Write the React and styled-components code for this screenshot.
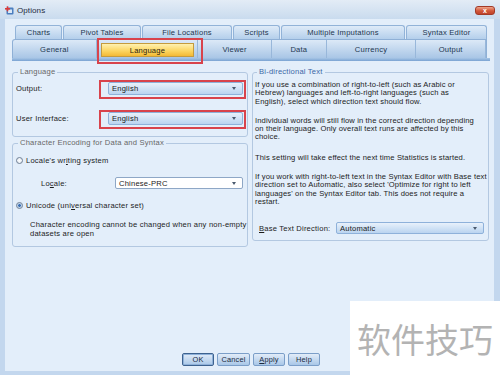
import React from 'react';
import styled, { createGlobalStyle, css } from 'styled-components';

const GlobalStyle = createGlobalStyle`
  html, body { margin: 0; padding: 0; background: #ffffff; }
  body { font-family: "Liberation Sans", Arial, sans-serif; }
  * { box-sizing: border-box; }
`;

const Window = styled.div`
  position: relative;
  width: 500px;
  height: 375px;
  background: #c3d7ee;
  display: flex;
  flex-direction: column;
  overflow: hidden;
  font-size: 7.6px;
  letter-spacing: 0.2px;
  color: #1c1c1c;
`;

const TitleBar = styled.div`
  flex: none;
  height: 19px;
  display: flex;
  align-items: center;
  padding: 1px 5px 0 5px;
  background: linear-gradient(#e3ecf6, #c9dbee);
`;

const TitleText = styled.span`
  margin-left: 3px;
  font-size: 8px;
  letter-spacing: 0.1px;
  color: #1e2c3e;
`;

const CloseButton = styled.div`
  margin-left: auto;
  width: 20px;
  height: 9px;
  border: 1px solid #a23a28;
  border-radius: 3px;
  background: linear-gradient(#eea58c, #d2573a 55%, #c0432a);
  display: flex;
  align-items: center;
  justify-content: center;
  color: #fff;
  font-size: 7px;
  font-weight: bold;
  line-height: 1;
`;

const Client = styled.div`
  flex: 1;
  margin: 0 6px 4px 5px;
  background: #e3eefa;
  display: flex;
  flex-direction: column;
  padding: 6px 4px 5px 7px;
`;

const TabRowTop = styled.div`
  display: flex;
  gap: 1px;
  height: 14px;
  padding-left: 3px;
`;

const TopTab = styled.div`
  width: ${p => p.$w}px;
  height: 14px;
  display: flex;
  align-items: center;
  justify-content: center;
  border: 1px solid #92b3d8;
  border-bottom: none;
  border-radius: 3px 3px 0 0;
  background: linear-gradient(#dfebf8, #b4cfeb);
  color: #22364f;
  white-space: nowrap;
`;

const TabRowBottom = styled.div`
  display: flex;
  width: 475px;
  height: 19px;
  border: 1px solid #8fb0d6;
  border-bottom: none;
  border-radius: 3px 0 0 0;
  background: linear-gradient(#dce9f7, #a9c6e6);
`;

const BottomTab = styled.div`
  position: relative;
  width: ${p => p.$w}px;
  display: flex;
  align-items: center;
  justify-content: center;
  border-right: 1px solid #98b7da;
  color: #22364f;
  white-space: nowrap;
  ${p => p.$active && css`
    z-index: 2;
    padding: 3px 3px 1px 4px;
    &::after {
      content: '';
      position: absolute;
      left: 0;
      right: -6px;
      top: -2px;
      bottom: -6px;
      border: 2px solid #d8434c;
    }
  `}
`;

const ActiveFace = styled.div`
  flex: 1;
  align-self: stretch;
  display: flex;
  align-items: center;
  justify-content: center;
  border: 1px solid #c49b3e;
  background: linear-gradient(#fff1b0, #fbd45e 60%, #f3b935);
  color: #2a2410;
`;

const TabUnderline = styled.div`
  height: 3px;
  background: linear-gradient(#a7c5e6, #7aa3d2);
`;

const Panels = styled.div`
  display: flex;
  align-items: flex-start;
  gap: 4px;
  margin-top: 7px;
`;

const Column = styled.div`
  width: ${p => p.$w}px;
  display: flex;
  flex-direction: column;
`;

const Group = styled.fieldset`
  margin: ${p => p.$mt || 0}px 0 0 0;
  padding: ${p => p.$pad};
  border: 1px solid #b3c8e1;
  border-radius: 3px;
  min-width: 0;
  display: flex;
  flex-direction: column;
`;

const Legend = styled.legend`
  margin-left: 2px;
  padding: 0 2px;
  line-height: 8px;
  color: ${p => (p.$blue ? '#3b67a6' : '#676767')};
`;

const FieldRow = styled.div`
  display: flex;
  align-items: center;
  margin-top: ${p => p.$mt || 0}px;
  padding-left: ${p => p.$pl || 0}px;
`;

const Label = styled.span`
  width: ${p => p.$w}px;
  flex: none;
  color: #1c1c1c;
`;

const Combo = styled.div`
  position: relative;
  width: ${p => p.$w}px;
  height: ${p => p.$h || 12}px;
  display: flex;
  align-items: center;
  padding: 0 2px 0 3px;
  border: 1px solid ${p => (p.$white ? '#8ea7c6' : '#8eb1da')};
  border-radius: 2px;
  background: ${p => (p.$white ? '#ffffff' : 'linear-gradient(#e8f1fb, #bad4f0)')};
  color: #1a1a1a;
  ${p => p.$marked && css`
    &::after {
      content: '';
      position: absolute;
      left: -10px;
      right: -4px;
      top: -3px;
      bottom: -5px;
      border: 2px solid #d8434c;
    }
  `}
`;

const ComboText = styled.span`
  flex: 1;
  white-space: nowrap;
`;

const Arrow = styled.span`
  width: 0;
  height: 0;
  margin-right: 4px;
  border-left: 2.5px solid transparent;
  border-right: 2.5px solid transparent;
  border-top: 3px solid #4a5a6e;
`;

const RadioRow = styled.div`
  display: flex;
  align-items: center;
  gap: 3px;
  height: 9px;
  margin-top: ${p => p.$mt || 0}px;
`;

const Radio = styled.span`
  width: 7px;
  height: 7px;
  flex: none;
  border-radius: 50%;
  border: 1px solid #6f8095;
  background: ${p =>
    p.$checked
      ? 'radial-gradient(circle, #3b6db0 0 32%, #9fbfe3 42%, #ffffff 100%)'
      : 'radial-gradient(circle, #ffffff, #dde5ee)'};
`;

const Note = styled.div`
  margin-top: ${p => p.$mt || 0}px;
  padding-left: ${p => p.$pl || 0}px;
  line-height: 8.5px;
  white-space: nowrap;
`;

const Paragraph = styled.p`
  margin: ${p => p.$mt || 0}px 0 0 0;
  line-height: 8.3px;
  letter-spacing: 0.13px;
  white-space: nowrap;
`;

const ButtonBar = styled.div`
  margin-top: auto;
  display: flex;
  justify-content: center;
  gap: 3px;
`;

const Button = styled.button`
  width: ${p => p.$w}px;
  height: 13px;
  padding: 0;
  font-family: inherit;
  font-size: 7.4px;
  letter-spacing: 0.2px;
  color: #1a2a40;
  border: 1px solid ${p => (p.$default ? '#3d628f' : '#7b9ec8')};
  box-shadow: ${p => (p.$default ? 'inset 0 0 0 1px #8fb1d9' : 'none')};
  border-radius: 2px;
  background: linear-gradient(#e2ecf8, #a8c7e8);
`;

const Watermark = styled.div`
  position: absolute;
  right: 0;
  bottom: 0;
  width: 150px;
  height: 74px;
  background: #ffffff;
  display: flex;
  align-items: center;
  justify-content: center;
  font-family: "Noto Sans CJK SC", sans-serif;
  font-size: 34px;
  letter-spacing: 0;
  color: #b3b3b3;
`;

const AppIcon = () => (
  <svg width="9" height="9" viewBox="0 0 9 9">
    <rect x="1.5" y="1.5" width="7" height="7" rx="1" fill="#4c7fc0" />
    <rect x="3" y="3.5" width="4" height="3.5" fill="#dbe8f6" />
    <rect x="0" y="2" width="5" height="1.6" fill="#d93a3a" />
    <rect x="1.7" y="0.3" width="1.6" height="5" fill="#d93a3a" />
  </svg>
);

const topTabs = [
  ['Charts', 47],
  ['Pivot Tables', 78],
  ['File Locations', 90],
  ['Scripts', 47],
  ['Multiple Imputations', 124],
  ['Syntax Editor', 81],
];

const bottomTabs = [
  ['General', 84],
  ['Language', 102, true],
  ['Viewer', 74],
  ['Data', 55],
  ['Currency', 90],
  ['Output', 70],
];

export default function App() {
  return (
    <>
      <GlobalStyle />
      <Window>
        <TitleBar>
          <AppIcon />
          <TitleText>Options</TitleText>
          <CloseButton>x</CloseButton>
        </TitleBar>
        <Client>
          <TabRowTop>
            {topTabs.map(([t, w]) => (
              <TopTab key={t} $w={w}>{t}</TopTab>
            ))}
          </TabRowTop>
          <TabRowBottom>
            {bottomTabs.map(([t, w, active]) => (
              <BottomTab key={t} $w={w} $active={active}>
                {active ? <ActiveFace>{t}</ActiveFace> : t}
              </BottomTab>
            ))}
          </TabRowBottom>
          <TabUnderline />
          <Panels>
            <Column $w={236}>
              <Group $pad="0 3px 11px 3px">
                <Legend>Language</Legend>
                <FieldRow $mt={6}>
                  <Label $w={92}>Output:</Label>
                  <Combo $w={135} $h={13} $marked>
                    <ComboText>English</ComboText>
                    <Arrow />
                  </Combo>
                </FieldRow>
                <FieldRow $mt={17}>
                  <Label $w={92}>User Interface:</Label>
                  <Combo $w={135} $h={13} $marked>
                    <ComboText>English</ComboText>
                    <Arrow />
                  </Combo>
                </FieldRow>
              </Group>
              <Group $mt={2} $pad="0 3px 8px 3px">
                <Legend>Character Encoding for Data and Syntax</Legend>
                <RadioRow $mt={9}>
                  <Radio />
                  <span>Locale's wr<u>i</u>ting system</span>
                </RadioRow>
                <FieldRow $mt={12} $pl={25}>
                  <Label $w={74}>Lo<u>c</u>ale:</Label>
                  <Combo $w={128} $white>
                    <ComboText>Chinese-PRC</ComboText>
                    <Arrow />
                  </Combo>
                </FieldRow>
                <RadioRow $mt={12}>
                  <Radio $checked />
                  <span>Unicode (uni<u>v</u>ersal character set)</span>
                </RadioRow>
                <Note $mt={11} $pl={14}>
                  Character encoding cannot be changed when any non-empty
                  <br />
                  datasets are open
                </Note>
              </Group>
            </Column>
            <Column $w={237}>
              <Group $pad="0 2px 6px 2px">
                <Legend $blue>Bi-directional Text</Legend>
                <Paragraph $mt={5}>
                  If you use a combination of right-to-left (such as Arabic or
                  <br />
                  Hebrew) languages and left-to-right languages (such as
                  <br />
                  English), select which direction text should flow.
                </Paragraph>
                <Paragraph $mt={11}>
                  Individual words will still flow in the correct direction depending
                  <br />
                  on their language. Only overall text runs are affected by this
                  <br />
                  choice.
                </Paragraph>
                <Paragraph $mt={12}>
                  This setting will take effect the next time Statistics is started.
                </Paragraph>
                <Paragraph $mt={11}>
                  If you work with right-to-left text in the Syntax Editor with Base text
                  <br />
                  direction set to Automatic, also select 'Optimize for right to left
                  <br />
                  languages' on the Syntax Editor tab. This does not require a
                  <br />
                  restart.
                </Paragraph>
                <FieldRow $mt={16} $pl={4}>
                  <Label $w={77}><u>B</u>ase Text Direction:</Label>
                  <Combo $w={148}>
                    <ComboText>Automatic</ComboText>
                    <Arrow />
                  </Combo>
                </FieldRow>
              </Group>
            </Column>
          </Panels>
          <ButtonBar>
            <Button $w={32} $default>OK</Button>
            <Button $w={33}>Cancel</Button>
            <Button $w={32}><u>A</u>pply</Button>
            <Button $w={32}>Help</Button>
          </ButtonBar>
        </Client>
        <Watermark>软件技巧</Watermark>
      </Window>
    </>
  );
}
